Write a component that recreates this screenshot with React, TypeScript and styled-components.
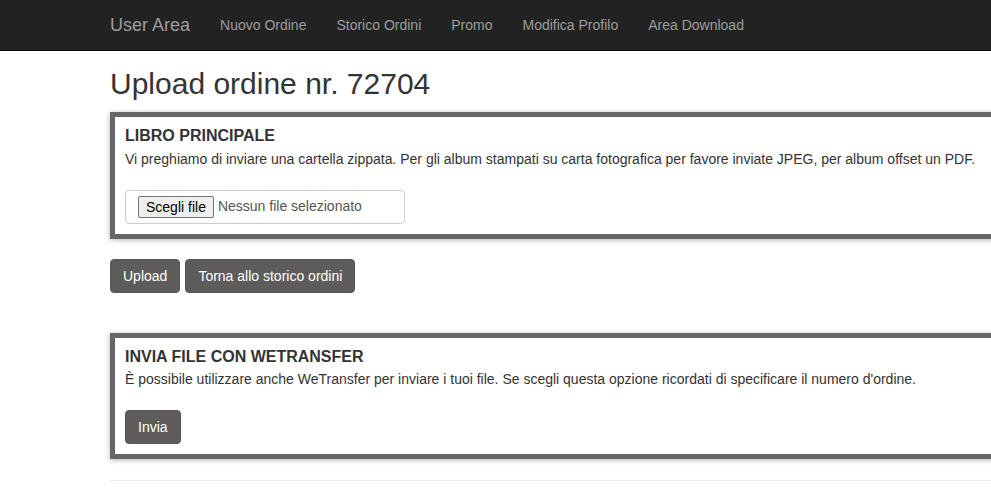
import React from 'react';
import styled, { createGlobalStyle } from 'styled-components';

const GlobalStyle = createGlobalStyle`
  html, body {
    margin: 0;
    padding: 0;
    overflow-x: hidden;
    background: #fff;
  }
  body {
    font-family: "Liberation Sans", Arial, Helvetica, sans-serif;
    font-size: 14px;
    line-height: 1.42857;
    color: #333;
  }
  * {
    box-sizing: border-box;
  }
`;

const Navbar = styled.nav`
  height: 51px;
  background: #222;
  border-bottom: 1px solid #080808;
`;

const NavInner = styled.div`
  display: flex;
  align-items: center;
  width: 1170px;
  height: 50px;
  margin-left: 95px;
  padding: 0 15px;
`;

const Brand = styled.a`
  display: block;
  margin-left: -15px;
  padding: 15px;
  font-size: 18px;
  line-height: 20px;
  color: #9d9d9d;
  text-decoration: none;
`;

const NavLink = styled.a`
  display: block;
  padding: 15px;
  line-height: 20px;
  color: #9d9d9d;
  text-decoration: none;
`;

const Container = styled.div`
  width: 1170px;
  margin-left: 95px;
  padding: 0 15px;
`;

const Title = styled.h2`
  margin: 16px 0 12px;
  font-size: 30px;
  font-weight: 500;
  line-height: 33px;
  color: #333;
`;

const Panel = styled.section`
  border: 5px solid #666;
  padding: 10px;
  background: #fff;
  box-shadow: 0 1px 5px rgba(0, 0, 0, 0.3);
`;

const PanelTitle = styled.h4`
  margin: 0 0 4px;
  font-size: 16px;
  font-weight: 700;
  line-height: 17.6px;
  color: #333;
`;

const PanelText = styled.p`
  margin: 0 0 21px;
  line-height: 20px;
`;

const FileBox = styled.div`
  display: flex;
  align-items: center;
  gap: 4px;
  width: 280px;
  height: 34px;
  padding: 0 12px;
  border: 1px solid #ccc;
  border-radius: 4px;
  color: #555;
`;

const FileButton = styled.span`
  display: inline-block;
  height: 22px;
  padding: 0 7px;
  border: 1px solid #767676;
  border-radius: 2px;
  background: #efefef;
  color: #000;
  line-height: 20px;
`;

const Actions = styled.div`
  display: flex;
  gap: 5px;
  margin: 20px 0 40px;
`;

const Button = styled.button`
  height: 34px;
  padding: 6px 12px;
  border: 1px solid #575555;
  border-radius: 4px;
  background: #5e5c5b;
  color: #fff;
  font-family: inherit;
  font-size: 14px;
  line-height: 20px;
  cursor: pointer;
`;

const Rule = styled.hr`
  margin: 21px 0 0;
  border: 0;
  border-top: 1px solid #eee;
`;

const links = ['Nuovo Ordine', 'Storico Ordini', 'Promo', 'Modifica Profilo', 'Area Download'];

const App = () => {
  return (
    <>
      <GlobalStyle />
      <Navbar>
        <NavInner>
          <Brand href="#">User Area</Brand>
          {links.map((l) => (
            <NavLink key={l} href="#">
              {l}
            </NavLink>
          ))}
        </NavInner>
      </Navbar>
      <Container>
        <Title>Upload ordine nr. 72704</Title>
        <Panel>
          <PanelTitle>LIBRO PRINCIPALE</PanelTitle>
          <PanelText>
            Vi preghiamo di inviare una cartella zippata. Per gli album stampati su carta fotografica per
            favore inviate JPEG, per album offset un PDF.
          </PanelText>
          <FileBox>
            <FileButton>Scegli file</FileButton>
            <span>Nessun file selezionato</span>
          </FileBox>
        </Panel>
        <Actions>
          <Button>Upload</Button>
          <Button>Torna allo storico ordini</Button>
        </Actions>
        <Panel>
          <PanelTitle>INVIA FILE CON WETRANSFER</PanelTitle>
          <PanelText>
            È possibile utilizzare anche WeTransfer per inviare i tuoi file. Se scegli questa opzione
            ricordati di specificare il numero d'ordine.
          </PanelText>
          <Button>Invia</Button>
        </Panel>
        <Rule />
      </Container>
    </>
  );
};

export default App;
